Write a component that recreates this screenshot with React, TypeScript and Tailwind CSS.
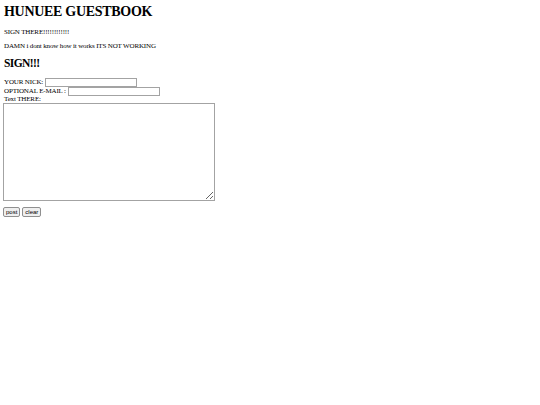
import { useState } from "react"

export default function App() {
  const [nick, setNick] = useState("")
  const [email, setEmail] = useState("")
  const [text, setText] = useState("")

  const clear = () => {
    setNick("")
    setEmail("")
    setText("")
  }

  return (
    <div className="min-h-screen bg-white text-black pl-[3px] pt-[3px] font-['Liberation_Serif',serif] text-[7px] leading-[9px] tracking-[-0.15px]">
      <h1 className="text-[14px] leading-[18px] font-bold pl-[1px] tracking-[-0.3px]">HUNUEE GUESTBOOK</h1>

      <p className="mt-[7px] pl-[1px]">SIGN THERE!!!!!!!!!!!!</p>
      <p className="mt-[5px] pl-[1px]">DAMN i dont know how it works ITS NOT WORKING</p>

      {/* formulaire */}
      <h2 className="mt-[5px] text-[11.5px] leading-[14px] font-bold pl-[1px] tracking-[-0.6px]">SIGN!!!</h2>

      <form className="mt-[8px]" onSubmit={e => e.preventDefault()}>
        <div className="flex items-center pl-[1px] h-[9px]">
          <span>YOUR NICK:</span>
          <input
            value={nick}
            onChange={e => setNick(e.target.value)}
            className="ml-[2px] w-[92px] h-[9px] border border-[#a3a3a3] bg-white outline-none"
          />
        </div>
        <div className="flex items-center pl-[1px] h-[9px]">
          <span>OPTIONAL E-MAIL :</span>
          <input
            value={email}
            onChange={e => setEmail(e.target.value)}
            className="ml-[2px] w-[92px] h-[9px] border border-[#a3a3a3] bg-white outline-none"
          />
        </div>
        <div className="pl-[1px] h-[7px] leading-[7px]">Text THERE:</div>
        <textarea
          value={text}
          onChange={e => setText(e.target.value)}
          className="block w-[212px] h-[98px] border border-[#a3a3a3] bg-white outline-none resize"
        />

        <div className="mt-[6px] flex gap-[2px]">
          <button
            type="submit"
            className="h-[10px] px-[2px] text-[6px] leading-[8px] tracking-normal font-['Liberation_Sans',sans-serif] bg-[#efefef] border border-[#8f8f8f] rounded-[2px]">
            post
          </button>
          <button
            type="button"
            onClick={clear}
            className="h-[10px] px-[2px] text-[6px] leading-[8px] tracking-normal font-['Liberation_Sans',sans-serif] bg-[#efefef] border border-[#8f8f8f] rounded-[2px]">
            clear
          </button>
        </div>
      </form>
    </div>
  )
}
